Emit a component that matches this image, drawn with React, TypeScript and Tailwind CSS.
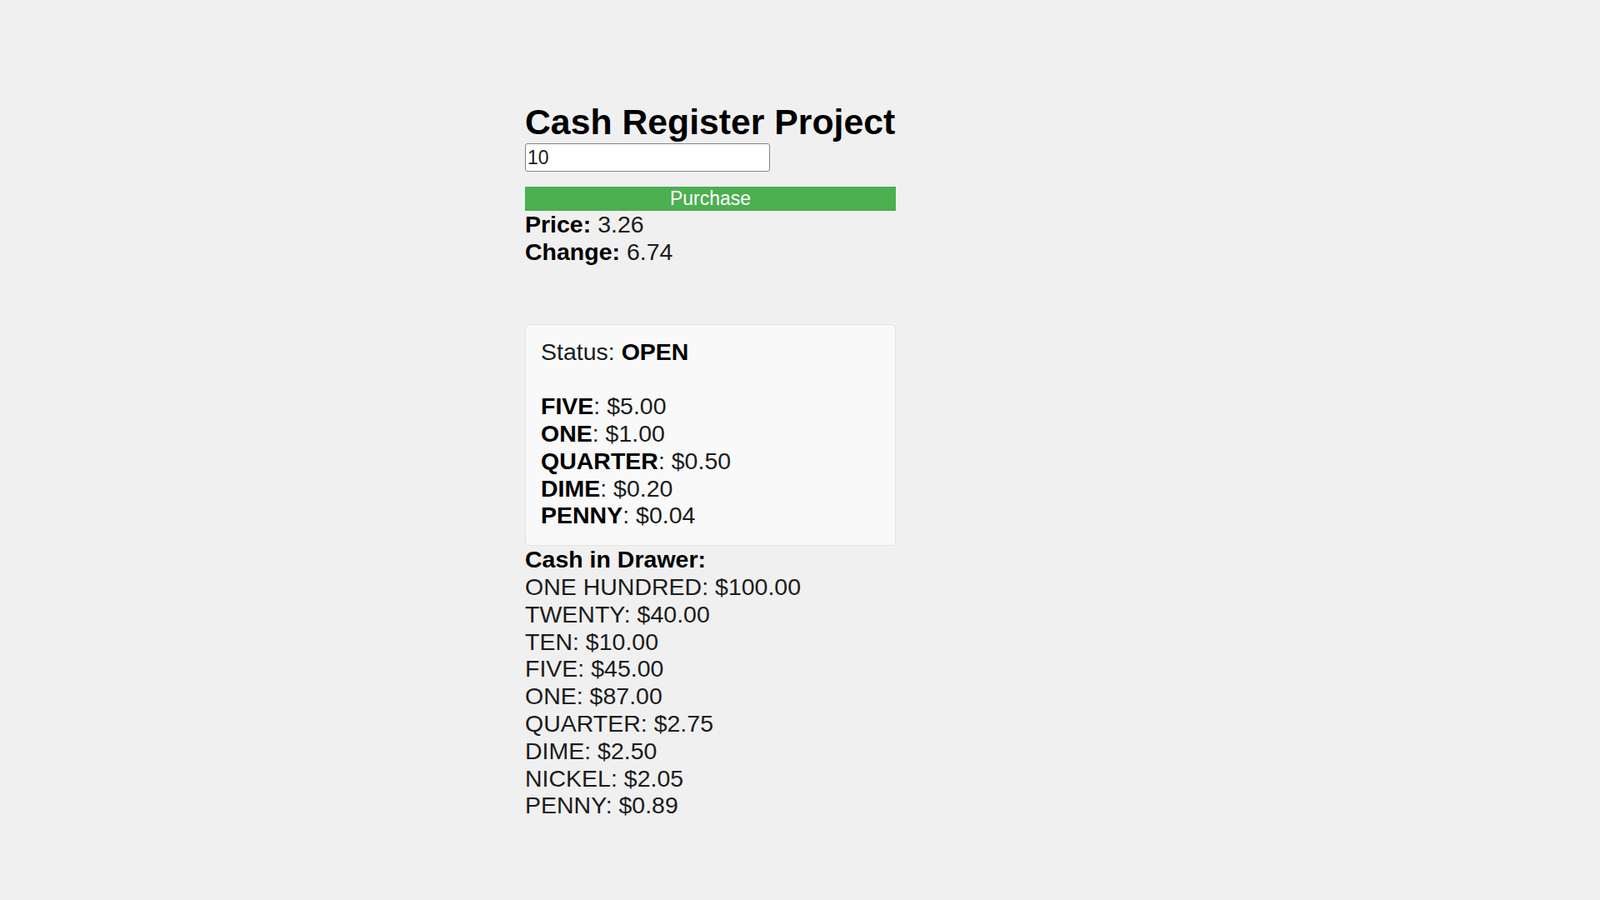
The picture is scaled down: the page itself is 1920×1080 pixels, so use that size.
import React from "react";

const change = [
  ["FIVE", "$5.00"],
  ["ONE", "$1.00"],
  ["QUARTER", "$0.50"],
  ["DIME", "$0.20"],
  ["PENNY", "$0.04"],
];

const drawer = [
  ["ONE HUNDRED", "$100.00"],
  ["TWENTY", "$40.00"],
  ["TEN", "$10.00"],
  ["FIVE", "$45.00"],
  ["ONE", "$87.00"],
  ["QUARTER", "$2.75"],
  ["DIME", "$2.50"],
  ["NICKEL", "$2.05"],
  ["PENNY", "$0.89"],
];

const App = () => {
  return (
    <div className="min-h-screen bg-[#f0f0f0] font-['Liberation_Sans',Arial,sans-serif] text-[28.5px] leading-[32.8px] text-[#1c1c1c]">
      <main className="ml-[630px] w-[445px] pt-[122px]">
        <h1 className="text-[42.75px] leading-[49px] font-bold text-black">Cash Register Project</h1>
        <input
          type="text"
          defaultValue="10"
          className="mt-[1px] block w-[294px] h-[34px] border border-[#858585] rounded-[3px] bg-white px-[2px] text-[23px] text-[#1c1c1c] outline-none"
        />
        <button className="mt-[18px] block w-full h-[29px] bg-[#4caf50] text-white text-[23px] leading-none">
          Purchase
        </button>
        <div>
          <b className="text-black">Price:</b> 3.26
        </div>
        <div>
          <b className="text-black">Change:</b> 6.74
        </div>

        <div className="mt-[70px] border border-[#e2e2e2] rounded-[6px] bg-[#f9f9f9] px-[18px] pt-[16px] pb-[19px]">
          <p>
            Status: <b className="text-black">OPEN</b>
          </p>
          <p className="mt-[32.8px]">
            {change.map(([name, amt]) => (
              <span key={name} className="block">
                <b className="text-black">{name}</b>: {amt}
              </span>
            ))}
          </p>
        </div>

        <div>
          <p className="font-bold text-black">Cash in Drawer:</p>
          {drawer.map(([name, amt]) => (
            <p key={name}>
              {name}: {amt}
            </p>
          ))}
        </div>
      </main>
    </div>
  );
};

export default App;
